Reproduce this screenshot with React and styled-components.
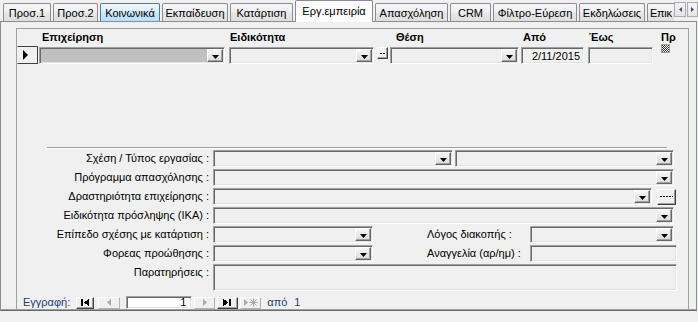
import React from 'react';
import styled, { createGlobalStyle, css } from 'styled-components';

const GlobalStyle = createGlobalStyle`
  html, body { margin: 0; padding: 0; background: #f0f0f0; }
  body { font-family: "Liberation Sans", Arial, sans-serif; font-size: 11px; color: #000; }
  * { box-sizing: border-box; }
`;

const Window = styled.div`
  width: 698px;
  height: 322px;
  overflow: hidden;
  background: #f0f0f0;
  display: flex;
  flex-direction: column;
`;

const TabStrip = styled.div`
  display: flex;
  height: 22px;
  flex-shrink: 0;
`;

const TabList = styled.div`
  width: 674px;
  display: flex;
  align-items: flex-end;
  padding-left: 3px;
  overflow: hidden;
`;

const Tab = styled.div`
  flex: 0 0 ${(p) => p.$w}px;
  height: ${(p) => (p.$active ? 22 : 19)}px;
  margin-right: 2px;
  border: 1px solid ${(p) => (p.$hover ? '#3c7fb1' : '#898c95')};
  border-bottom: none;
  border-radius: 2px 2px 0 0;
  background: ${(p) =>
    p.$active
      ? '#fcfcfc'
      : p.$hover
      ? 'linear-gradient(#eaf6fd, #d9f0fc 45%, #c6e8fc 50%, #b5def6)'
      : 'linear-gradient(#f6f6f6, #efefef 45%, #e6e6e6 50%, #dedede)'};
  display: flex;
  align-items: center;
  justify-content: ${(p) => (p.$clip ? 'flex-start' : 'center')};
  padding-left: ${(p) => (p.$clip ? 2 : 0)}px;
  letter-spacing: ${(p) => (p.$clip ? '-0.3px' : 'normal')};
  white-space: nowrap;
  padding-bottom: ${(p) => (p.$active ? 2 : 0)}px;
  ${(p) =>
    p.$active &&
    css`
      position: relative;
      z-index: 1;
    `}
`;

const TabScroll = styled.div`
  display: flex;
  gap: 1px;
  padding-top: 2px;
  height: 18px;
`;

const ScrollBtn = styled.div`
  width: ${(p) => p.$w}px;
  height: 15px;
  border: 1px solid #acacac;
  background: linear-gradient(#f4f4f4, #e4e4e4);
  display: flex;
  align-items: center;
  justify-content: center;
`;

const Page = styled.div`
  width: 697px;
  height: 290px;
  margin-top: -1px;
  border: 1px solid #898c95;
  border-bottom-color: #696969;
  box-shadow: inset 0 -1px 0 #a0a0a0;
  background: #f0f0f0;
  display: flex;
  flex-direction: column;
  padding: 6px 0 1px 15px;
`;

const Subform = styled.div`
  width: 673px;
  flex: 1;
  border-left: 1px solid #a0a0a0;
  border-top: 1px solid #a0a0a0;
  border-right: 1px solid #a0a0a0;
  display: flex;
  flex-direction: column;
`;

const HeaderRow = styled.div`
  display: flex;
  height: 13px;
  margin-top: 2px;
`;

const HeadCell = styled.div`
  flex: 0 0 ${(p) => p.$w}px;
  margin-left: ${(p) => p.$ml || 0}px;
  padding-left: ${(p) => p.$pl || 0}px;
  font-weight: bold;
  line-height: 13px;
  white-space: nowrap;
`;

const DataRow = styled.div`
  display: flex;
  height: 17px;
  margin-top: 3px;
`;

const Selector = styled.div`
  flex: 0 0 21px;
  height: 18px;
  margin-top: -1px;
  border: 1px solid;
  border-color: #404040 #404040 #404040 #f0f0f0;
  display: flex;
  align-items: center;
  justify-content: center;
  padding-right: 4px;
`;

const sunken = css`
  border-style: solid;
  border-width: 1px;
  border-color: #a0a0a0 #ffffff #ffffff #a0a0a0;
  box-shadow: inset 1px 1px 0 #696969, inset -1px -1px 0 #e3e3e3;
`;

const Combo = styled.div`
  ${sunken}
  flex: 0 0 ${(p) => p.$w}px;
  height: 17px;
  margin-left: ${(p) => p.$ml || 0}px;
  background: ${(p) => p.$fill || '#f0f0f0'};
  display: flex;
  justify-content: flex-end;
  padding: 1px 1px 1px 0;
`;

const DropBtn = styled.div`
  width: 16px;
  height: 13px;
  border: 1px solid;
  border-color: #ffffff #696969 #696969 #ffffff;
  box-shadow: inset -1px -1px 0 #a0a0a0;
  background: linear-gradient(#f6f6f6, #dcdcdc);
  display: flex;
  align-items: flex-end;
  justify-content: center;
  padding-bottom: 2px;
`;

const TextBox = styled.div`
  ${sunken}
  flex: 0 0 ${(p) => p.$w}px;
  height: ${(p) => p.$h || 17}px;
  margin-left: ${(p) => p.$ml || 0}px;
  background: ${(p) => p.$bg || '#f0f0f0'};
  text-align: right;
  padding: 1px 3px 0 0;
  line-height: 14px;
  white-space: nowrap;
`;

const SmallBtn = styled.div`
  flex: 0 0 ${(p) => p.$w}px;
  height: ${(p) => p.$h}px;
  margin-left: ${(p) => p.$ml || 0}px;
  border: 1px solid;
  border-color: #ffffff #404040 #404040 #ffffff;
  box-shadow: inset -1px -1px 0 #a0a0a0;
  background: #f0f0f0;
  display: flex;
  align-items: center;
  justify-content: center;
`;

const Dashes = styled.span`
  width: ${(p) => p.$w}px;
  height: 1px;
  background: repeating-linear-gradient(90deg, #000 0 2px, transparent 2px 3px);
`;

const CheckCell = styled.div`
  flex: 0 0 9px;
  height: 9px;
  margin-left: ${(p) => p.$ml}px;
  margin-top: -4px;
`;

const ListArea = styled.div`
  height: 83px;
`;

const Separator = styled.div`
  width: 620px;
  height: 2px;
  margin-left: 30px;
  border-top: 1px solid #a0a0a0;
  border-bottom: 1px solid #ffffff;
`;

const Fields = styled.div`
  display: flex;
  flex-direction: column;
  gap: 2px;
  margin-top: 1px;
`;

const FieldRow = styled.div`
  display: flex;
  align-items: ${(p) => (p.$top ? 'flex-start' : 'center')};
  height: ${(p) => p.$h || 17}px;
`;

const FieldLabel = styled.div`
  flex: 0 0 ${(p) => p.$w || 192}px;
  margin-left: ${(p) => p.$ml || 0}px;
  margin-right: ${(p) => (p.$side ? 0 : 4)}px;
  text-align: ${(p) => (p.$side ? 'left' : 'right')};
  padding-top: ${(p) => p.$pt || 0}px;
  line-height: 13px;
  white-space: nowrap;
`;

const NavBar = styled.div`
  display: flex;
  align-items: center;
  height: 13px;
  margin-top: 5px;
  color: #1f3c78;
`;

const NavText = styled.span`
  margin-left: ${(p) => p.$ml}px;
  white-space: nowrap;
  line-height: 13px;
`;

const NavBtn = styled.div`
  flex: 0 0 ${(p) => p.$w}px;
  height: 12px;
  margin-left: ${(p) => p.$ml}px;
  border: 1px solid;
  border-color: ${(p) =>
    p.$off ? '#ffffff #b4b4b4 #b4b4b4 #ffffff' : '#ffffff #404040 #404040 #ffffff'};
  box-shadow: ${(p) => (p.$off ? 'none' : 'inset -1px -1px 0 #a0a0a0')};
  background: #f0f0f0;
  display: flex;
  align-items: center;
  justify-content: center;
`;

const NavBox = styled.div`
  ${sunken}
  flex: 0 0 66px;
  height: 13px;
  margin-left: ${(p) => p.$ml}px;
  background: #ffffff;
  color: #000;
  text-align: right;
  padding-right: 5px;
  line-height: 11px;
`;

const Arrow = () => (
  <svg width="7" height="4" viewBox="0 0 7 4">
    <polygon points="0,0 7,0 3.5,4" fill="#000" />
  </svg>
);

const Check = () => (
  <svg width="9" height="9" viewBox="0 0 9 9" shapeRendering="crispEdges">
    <defs>
      <pattern id="chk" width="2" height="2" patternUnits="userSpaceOnUse">
        <rect width="2" height="2" fill="#ffffff" />
        <rect width="1" height="1" fill="#3a3a3a" />
        <rect x="1" y="1" width="1" height="1" fill="#3a3a3a" />
      </pattern>
    </defs>
    <rect x="0" y="0" width="9" height="9" fill="#a0a0a0" />
    <rect x="1" y="1" width="7" height="7" fill="url(#chk)" />
  </svg>
);

const Glyph = ({ kind, off }) => {
  const c = off ? '#a8a8a8' : '#000';
  if (kind === 'first')
    return (
      <svg width="9" height="7" viewBox="0 0 9 7" shapeRendering="crispEdges">
        <rect x="0" y="0" width="2" height="7" fill={c} />
        <polygon points="3,3.5 8,-0.5 8,7.5" fill={c} />
      </svg>
    );
  if (kind === 'prev')
    return (
      <svg width="5" height="7" viewBox="0 0 5 7">
        <polygon points="0,3.5 4,0 4,7" fill={c} />
      </svg>
    );
  if (kind === 'next')
    return (
      <svg width="5" height="7" viewBox="0 0 5 7">
        <polygon points="1,0 5,3.5 1,7" fill={c} />
      </svg>
    );
  if (kind === 'last')
    return (
      <svg width="9" height="7" viewBox="0 0 9 7" shapeRendering="crispEdges">
        <polygon points="0,-0.5 5,3.5 0,7.5" fill={c} />
        <rect x="6" y="0" width="2" height="7" fill={c} />
      </svg>
    );
  return (
    <svg width="14" height="9" viewBox="0 0 14 9">
      <polygon points="0,1 4,4.5 0,8" fill={c} />
      <g stroke={c} strokeWidth="1">
        <line x1="9.5" y1="0.5" x2="9.5" y2="8.5" />
        <line x1="5.5" y1="4.5" x2="13.5" y2="4.5" />
        <line x1="6.5" y1="1.5" x2="12.5" y2="7.5" />
        <line x1="12.5" y1="1.5" x2="6.5" y2="7.5" />
      </g>
    </svg>
  );
};

const tabs = [
  { t: 'Προσ.1', w: 48 },
  { t: 'Προσ.2', w: 45 },
  { t: 'Κοινωνικά', w: 60, hover: true },
  { t: 'Εκπαίδευση', w: 66 },
  { t: 'Κατάρτιση', w: 63 },
  { t: 'Εργ.εμπειρία', w: 78, active: true },
  { t: 'Απασχόληση', w: 73 },
  { t: 'CRM', w: 41 },
  { t: 'Φίλτρο-Εύρεση', w: 84 },
  { t: 'Εκδηλώσεις', w: 66 },
  { t: 'Επικ', w: 70, clip: true },
];

const ComboBox = ({ w, ml, fill }) => (
  <Combo $w={w} $ml={ml} $fill={fill}>
    <DropBtn>
      <Arrow />
    </DropBtn>
  </Combo>
);

export default function App() {
  return (
    <Window>
      <GlobalStyle />
      <TabStrip>
        <TabList>
          {tabs.map((t) => (
            <Tab key={t.t} $w={t.w} $active={t.active} $hover={t.hover} $clip={t.clip}>
              {t.t}
            </Tab>
          ))}
        </TabList>
        <TabScroll>
          <ScrollBtn $w={12}>
            <svg width="3" height="5" viewBox="0 0 3 5">
              <polygon points="0,2.5 3,0 3,5" fill="#2b4f9a" />
            </svg>
          </ScrollBtn>
          <ScrollBtn $w={11}>
            <svg width="3" height="5" viewBox="0 0 3 5">
              <polygon points="0,0 3,2.5 0,5" fill="#2b4f9a" />
            </svg>
          </ScrollBtn>
        </TabScroll>
      </TabStrip>
      <Page>
        <Subform>
          <HeaderRow>
            <HeadCell $w={21} />
            <HeadCell $w={186} $ml={1} $pl={3}>Επιχείρηση</HeadCell>
            <HeadCell $w={145} $ml={4} $pl={1}>Ειδικότητα</HeadCell>
            <HeadCell $w={11} $ml={3} />
            <HeadCell $w={129} $ml={2} $pl={6}>Θέση</HeadCell>
            <HeadCell $w={63} $ml={2} $pl={2}>Από</HeadCell>
            <HeadCell $w={65} $ml={4} $pl={1}>Έως</HeadCell>
            <HeadCell $w={12} $ml={8}>Πρ</HeadCell>
          </HeaderRow>
          <DataRow>
            <Selector>
              <svg width="5" height="10" viewBox="0 0 5 10">
                <polygon points="0,0 5,5 0,10" fill="#000" />
              </svg>
            </Selector>
            <ComboBox w={186} ml={1} fill="#c0c0c0" />
            <ComboBox w={145} ml={4} />
            <SmallBtn $w={11} $h={12} $ml={3}>
              <Dashes $w={5} />
            </SmallBtn>
            <ComboBox w={129} ml={2} />
            <TextBox $w={63} $ml={2}>2/11/2015</TextBox>
            <TextBox $w={65} $ml={4} />
            <CheckCell $ml={8}>
              <Check />
            </CheckCell>
          </DataRow>
          <ListArea />
          <Separator />
          <Fields>
            <FieldRow>
              <FieldLabel>Σχέση / Τύπος εργασίας :</FieldLabel>
              <ComboBox w={240} />
              <ComboBox w={219} ml={2} />
            </FieldRow>
            <FieldRow>
              <FieldLabel>Πρόγραμμα απασχόλησης :</FieldLabel>
              <ComboBox w={461} />
            </FieldRow>
            <FieldRow>
              <FieldLabel>Δραστηριότητα επιχείρησης :</FieldLabel>
              <ComboBox w={439} />
              <SmallBtn $w={19} $h={16} $ml={5}>
                <Dashes $w={13} />
              </SmallBtn>
            </FieldRow>
            <FieldRow>
              <FieldLabel>Ειδικότητα πρόσληψης (ΙΚΑ) :</FieldLabel>
              <ComboBox w={461} />
            </FieldRow>
            <FieldRow>
              <FieldLabel>Επίπεδο σχέσης με κατάρτιση :</FieldLabel>
              <ComboBox w={160} />
              <FieldLabel $side $w={103} $ml={54}>Λόγος διακοπής :</FieldLabel>
              <ComboBox w={144} />
            </FieldRow>
            <FieldRow>
              <FieldLabel>Φορεας προώθησης :</FieldLabel>
              <ComboBox w={160} />
              <FieldLabel $side $w={103} $ml={54}>Αναγγελία (αρ/ημ) :</FieldLabel>
              <TextBox $w={147} />
            </FieldRow>
            <FieldRow $top $h={27}>
              <FieldLabel $pt={2}>Παρατηρήσεις :</FieldLabel>
              <TextBox $w={464} $h={27} />
            </FieldRow>
          </Fields>
          <NavBar>
            <NavText $ml={6}>Εγγραφή:</NavText>
            <NavBtn $w={18} $ml={6}>
              <Glyph kind="first" />
            </NavBtn>
            <NavBtn $w={22} $ml={4} $off>
              <Glyph kind="prev" off />
            </NavBtn>
            <NavBox $ml={6}>1</NavBox>
            <NavBtn $w={21} $ml={2} $off>
              <Glyph kind="next" off />
            </NavBtn>
            <NavBtn $w={21} $ml={2}>
              <Glyph kind="last" />
            </NavBtn>
            <NavBtn $w={21} $ml={2} $off>
              <Glyph kind="new" off />
            </NavBtn>
            <NavText $ml={6}>από</NavText>
            <NavText $ml={7}>1</NavText>
          </NavBar>
        </Subform>
      </Page>
    </Window>
  );
}
